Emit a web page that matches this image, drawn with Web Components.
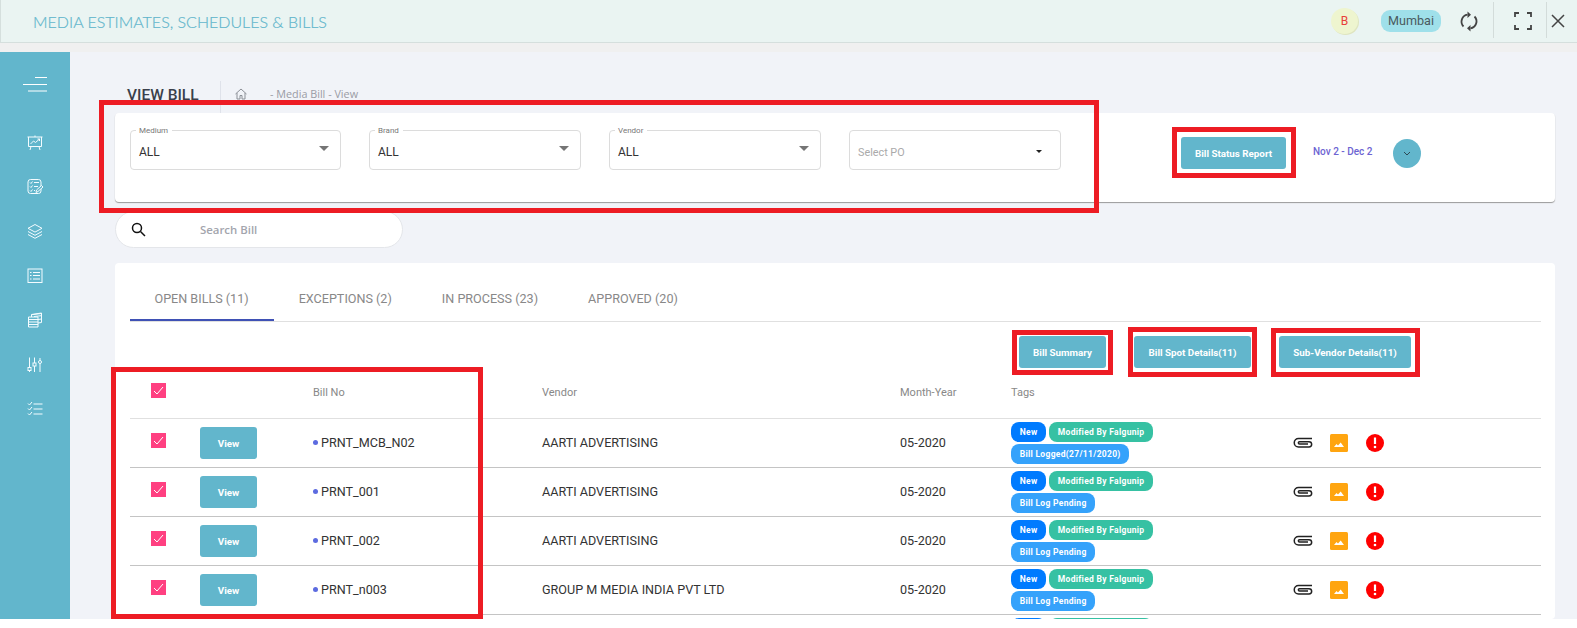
<!DOCTYPE html>
<html>
<head>
<meta charset="utf-8">
<style>
html, body { margin: 0; padding: 0; background: #fff; }
body { width: 1577px; height: 628px; overflow: hidden; font-family: Roboto, sans-serif; position: relative; }
</style>
</head>
<body>
<app-shell></app-shell>

<script>
const ICONS = {
    chart: '<path d="M.5 2h15M1.500 2v9.500h13V2M8 .5V2M4 11.500l-1 3.500M12 11.500l1 3.500M3.500 9l3-3 2 1.500 4-3.500M10.500 4h2v2"/>',
    notes: '<rect x="1" y=".5" width="13" height="14" rx="2.500"/><path d="M3 3.500l1 1 1.500-2M7 3.500h5M3 7.500l1 1 1.500-2M7 7.500h4M3 11.500l1 1 1.500-2M7 11.500h1"/><path d="M9 13.500l.5-2.500 5-4.500 1.500 1.500-5 4.500z" fill="#62b6cc"/>',
    layers: '<path d="M8 .5l7 3.800-7 3.800-7-3.800zM1 7.500l7 3.800 7-3.800M1 10.500l7 3.800 7-3.800"/>',
    list: '<rect x="1" y="1" width="14" height="13.500"/><path d="M3 4.500h1.500M6 4.500h7M3 7.500h1.500M6 7.500h7M3 11h1.500M6 11h7"/>',
    stack: '<path d="M1.500 5h9.500v10H1.500zM1.500 7.500h9.500M1.500 10h9.500M1.500 12.500h9.500M4.500 5V2.500L14.500 1v9.500L11 11M4.500 2.700l10-1.200M7 4.500l7.500-.8M11 7.500l3.500-.5"/>',
    sliders: '<path d="M2.500 .5v10M2.500 14v1M7.500 .5v5.500M7.500 9v6M13 3.500V1M13 6.500V15"/><rect x="1" y="10.500" width="3" height="3"/><rect x="6" y="6" width="3" height="3"/><circle cx="13" cy="5" r="1.500"/>',
    checks: '<path d="M1 2.500l1.500 1.500 2.500-3M6.500 3H15.500M1 7.500L2.500 9 5 6M6.500 8H15.500M1 12.500L2.500 14 5 11M6.500 13H15.500"/>'
};

const shellTemplate = document.createElement('template');
shellTemplate.innerHTML = `
<style>
:host { display: block; width: 1577px; height: 628px; position: relative; }
#gap { height: 9px; background: #f0f0f0; }
#body { display: flex; height: 567px; }
#content { flex: 1; background: #f1f3f8; padding: 29px 22px 0 45px; overflow: hidden; }
.mark { position: absolute; border: 5px solid #ed1c24; box-sizing: border-box; pointer-events: none; }
</style>
<top-bar></top-bar>
<div id="gap"></div>
<div id="body">
    <side-nav></side-nav>
    <div id="content">
        <page-title></page-title>
        <filter-card></filter-card>
        <search-box></search-box>
        <bill-panel></bill-panel>
    </div>
</div>
<div class="mark" style="left:99px;top:100px;width:1000px;height:113px"></div>
<div class="mark" style="left:1172px;top:127px;width:124px;height:51px"></div>
<div class="mark" style="left:1012px;top:330px;width:101px;height:45px"></div>
<div class="mark" style="left:1128px;top:327px;width:129px;height:50px"></div>
<div class="mark" style="left:1271px;top:328px;width:149px;height:49px"></div>
<div class="mark" style="left:111px;top:367px;width:372px;height:252px"></div>
`;
class AppShell extends HTMLElement {
    constructor() {
        super();
        this.attachShadow({ mode: 'open' }).appendChild(shellTemplate.content.cloneNode(true));
    }
}
customElements.define('app-shell', AppShell);

const topTemplate = document.createElement('template');
topTemplate.innerHTML = `
<style>
:host { display: flex; align-items: center; height: 43px; box-sizing: border-box; background: #eaf4f2; border: 1px solid #d5dfdd; border-width: 0 0 1px 1px; }
#title { font: 300 16px Lato, sans-serif; -webkit-text-stroke: .2px #62b6cc; color: #62b6cc; margin-left: 32px; flex: 1; }
#avatar { width: 27px; height: 26px; border-radius: 50%; background: #eef5cf; box-shadow: 1px 1px 0 #dfe5c0; color: #e8403a; font-size: 12px; display: flex; align-items: center; justify-content: center; margin-right: 23px; }
#city { width: 60px; height: 22px; text-align: center; border-radius: 9px; background: #9fe0ea; color: #4a5a60; font-size: 12.600px; line-height: 21px; margin-right: 18px; }
svg { display: block; fill: none; stroke: #444; }
.sep { width: 1px; height: 36px; background: #d3dcda; align-self: flex-start; margin-top: 2px; }
</style>
<div id="title">MEDIA ESTIMATES, SCHEDULES &amp; BILLS</div>
<div id="avatar">B</div>
<div id="city">Mumbai</div>
<svg width="20" height="21" viewBox="0 0 20 21" stroke-width="1.800" style="margin-right:14px">
    <path d="M8.500 3.700A7 7 0 0 0 4.500 15.500M11.500 17.300A7 7 0 0 0 15.500 5.500"/>
    <path d="M8.500 .5v6.500l3.500-3.200zM11.500 14v6.500L8 17.200z" fill="#444" stroke="none"/>
</svg>
<div class="sep"></div>
<svg width="18" height="18" viewBox="0 0 18 18" stroke-width="1.800" style="margin:0 14px 0 20px">
    <path d="M1 5V1h4M13 1h4v4M17 13v4h-4M5 17H1v-4"/>
</svg>
<div class="sep"></div>
<svg width="14" height="14" viewBox="0 0 14 14" stroke-width="1.500" style="margin:0 12px 0 4px">
    <path d="M1 1l12 12M13 1L1 13"/>
</svg>
`;
class TopBar extends HTMLElement {
    constructor() {
        super();
        this.attachShadow({ mode: 'open' }).appendChild(topTemplate.content.cloneNode(true));
    }
}
customElements.define('top-bar', TopBar);

const navTemplate = document.createElement('template');
navTemplate.innerHTML = `
<style>
:host { display: block; width: 70px; background: #62b6cc; flex: none; padding-top: 25px; box-sizing: border-box; }
#burger { display: block; margin: 0 0 0 23px; }
#items { display: flex; flex-direction: column; gap: 28.330px; align-items: center; margin-top: 43px; }
svg.item { display: block; width: 16px; height: 16px; fill: none; stroke: #f4fcff; stroke-width: 1; }
</style>
<svg id="burger" width="24" height="15" viewBox="0 0 24 15" stroke="#fff" stroke-width="1"><path d="M12 .5h12M0 7.500h24M5 14h19"/></svg>
<div id="items"></div>
`;
class SideNav extends HTMLElement {
    constructor() {
        super();
        this.attachShadow({ mode: 'open' }).appendChild(navTemplate.content.cloneNode(true));
        const items = this.shadowRoot.querySelector('#items');
        ['chart', 'notes', 'layers', 'list', 'stack', 'sliders', 'checks'].forEach(name => {
            items.insertAdjacentHTML('beforeend', `<svg class="item" viewBox="0 0 16 16">${ICONS[name]}</svg>`);
        });
    }
}
customElements.define('side-nav', SideNav);

const titleTemplate = document.createElement('template');
titleTemplate.innerHTML = `
<style>
:host { display: flex; align-items: flex-start; height: 32px; margin-left: 12px; }
h1 { margin: 0; font: 500 15.500px/29px Roboto, sans-serif; color: #3a3f4a; width: 93px; border-right: 1px solid #dfe2ea; height: 32px; }
#crumb { display: flex; align-items: center; margin-left: 14px; height: 25px; font: 400 10.800px "Open Sans", sans-serif; color: #9a9ca5; }
svg { display: block; margin-right: 23px; fill: none; stroke: #8b8f96; }
</style>
<h1>VIEW BILL</h1>
<div id="crumb">
    <svg width="12" height="12" viewBox="0 0 12 12"><path d="M.5 6L6 1l5.500 5M2 5v6h3V7.500h2V11h3V5"/></svg>
    <span>- Media Bill - View</span>
</div>
`;
class PageTitle extends HTMLElement {
    constructor() {
        super();
        this.attachShadow({ mode: 'open' }).appendChild(titleTemplate.content.cloneNode(true));
    }
}
customElements.define('page-title', PageTitle);

const selectTemplate = document.createElement('template');
selectTemplate.innerHTML = `
<style>
:host { display: block; height: 40px; box-sizing: border-box; border: 1px solid #dcdcdc; border-radius: 4px; position: relative; background: #fff; font-family: Roboto, sans-serif; }
#label { position: absolute; left: 5px; top: -5px; padding: 0 4px 0 3px; background: #fff; font-size: 8px; line-height: 9px; color: #777; }
#value { position: absolute; left: 8px; top: 14px; font-size: 12px; line-height: 15px; color: #333; }
#arrow { position: absolute; right: 11px; top: 15px; width: 0; height: 0; border: 5px solid transparent; border-top: 5px solid #757575; border-bottom: 0; }
:host([plain]) #value { color: #aaa; font-size: 10.800px; }
:host([plain]) #arrow { border-width: 3px 3.500px 0; border-top-color: #222; right: 18px; top: 19px; }
</style>
<span id="label"></span>
<span id="value"></span>
<span id="arrow"></span>
`;
class FilterSelect extends HTMLElement {
    constructor() {
        super();
        this.attachShadow({ mode: 'open' }).appendChild(selectTemplate.content.cloneNode(true));
        const label = this.shadowRoot.querySelector('#label');
        if (this.getAttribute('label')) label.textContent = this.getAttribute('label');
        else label.remove();
        this.shadowRoot.querySelector('#value').textContent = this.getAttribute('value');
    }
}
customElements.define('filter-select', FilterSelect);

const btnTemplate = document.createElement('template');
btnTemplate.innerHTML = `
<style>
:host { display: inline-flex; align-items: center; justify-content: center; height: 32px; box-sizing: border-box; background: #62b6cc; border-radius: 3px; color: #fff; font: 700 9.800px Roboto, sans-serif; white-space: nowrap; }
</style>
<slot></slot>
`;
class TealButton extends HTMLElement {
    constructor() {
        super();
        this.attachShadow({ mode: 'open' }).appendChild(btnTemplate.content.cloneNode(true));
    }
}
customElements.define('teal-button', TealButton);

const filterTemplate = document.createElement('template');
filterTemplate.innerHTML = `
<style>
:host { display: flex; align-items: flex-start; height: 89px; box-sizing: border-box; padding-top: 17px; padding-left: 15px; background: #fff; border-radius: 4px; box-shadow: 0 1px 1px #9a9a9a; }
filter-select { flex: none; }
#status { width: 105px; margin-left: 120px; margin-top: 7px; }
#range { margin-left: 27px; margin-top: 16px; font: 500 10px/12px Roboto, sans-serif; color: #6d64d2; white-space: nowrap; }
#round { width: 28px; height: 29px; border-radius: 50%; background: #62b6cc; margin-left: 21px; margin-top: 9px; display: flex; align-items: center; justify-content: center; }
</style>
<filter-select style="width:211px" label="Medium" value="ALL"></filter-select>
<filter-select style="width:212px;margin-left:28px" label="Brand" value="ALL"></filter-select>
<filter-select style="width:212px;margin-left:28px" label="Vendor" value="ALL"></filter-select>
<filter-select style="width:212px;margin-left:28px" plain value="Select PO"></filter-select>
<teal-button id="status">Bill Status Report</teal-button>
<div id="range">Nov 2 - Dec 2</div>
<div id="round"><svg width="8" height="5" viewBox="0 0 8 5" fill="none" stroke="#2d4a55"><path d="M1 1l3 3 3-3"/></svg></div>
`;
class FilterCard extends HTMLElement {
    constructor() {
        super();
        this.attachShadow({ mode: 'open' }).appendChild(filterTemplate.content.cloneNode(true));
    }
}
customElements.define('filter-card', FilterCard);

const searchTemplate = document.createElement('template');
searchTemplate.innerHTML = `
<style>
:host { display: flex; align-items: center; width: 288px; height: 37px; box-sizing: border-box; margin-top: 9px; background: #fff; border: 1px solid #e4e6ea; border-radius: 19px; }
svg { display: block; margin-left: 15px; fill: none; stroke: #111; stroke-width: 1.500; }
span { margin-left: 54px; font: 600 11.400px "Open Sans", sans-serif; color: #a3a5ad; }
</style>
<svg width="15" height="15" viewBox="0 0 15 15"><circle cx="6" cy="6" r="4.500"/><path d="M9.500 9.500l4.500 4.500"/></svg>
<span>Search Bill</span>
`;
class SearchBox extends HTMLElement {
    constructor() {
        super();
        this.attachShadow({ mode: 'open' }).appendChild(searchTemplate.content.cloneNode(true));
    }
}
customElements.define('search-box', SearchBox);

const rowTemplate = document.createElement('template');
rowTemplate.innerHTML = `
<style>
:host { display: grid; grid-template-columns: 70px 113px 229px 358px 111px 1fr; height: 49px; box-sizing: border-box; border-bottom: 1px solid #c4c4c4; font: 400 12.600px Roboto, sans-serif; color: #333; align-items: center; }
#check { width: 15px; height: 15px; margin-left: 21px; margin-top: -5px; background: #ff4081; display: flex; align-items: center; justify-content: center; }
#view { width: 57px; height: 32px; }
#bill { display: flex; align-items: center; color: #333; }
#bill i { width: 5px; height: 5px; border-radius: 50%; background: #5c6be0; margin-right: 3px; }
#bill, #vendor, #month { margin-top: -2px; }
#tags { display: flex; flex-wrap: wrap; gap: 2px 3px; align-content: center; width: 160px; }
.tag { height: 20px; padding: 0 8.700px; border-radius: 8px; color: #fff; font: 700 8.500px/20px Roboto, sans-serif; letter-spacing: .3px; white-space: nowrap; }
.new { background: #007bff; }
.mod { background: #36c1a3; }
.log { background: #35a2fb; }
#actions { display: flex; align-items: center; padding-left: 122px; gap: 17px; }
svg { display: block; }
</style>
<div id="check"><svg width="11" height="9" viewBox="0 0 11 9" fill="none" stroke="#fff" stroke-width="1"><path d="M1 5l3 3 6-7"/></svg></div>
<teal-button id="view">View</teal-button>
<div id="bill"><i></i><span id="no"></span></div>
<div id="vendor"></div>
<div id="month">05-2020</div>
<div style="display:flex">
    <div id="tags">
        <span class="tag new">New</span>
        <span class="tag mod">Modified By Falgunip</span>
        <span class="tag log" id="log"></span>
    </div>
    <div id="actions">
        <svg width="20" height="12" viewBox="0 0 20 12" fill="none" stroke="#222" stroke-width="1.500"><path d="M19 1.500H5.500a4 4 0 0 0 0 8.500H16a2.500 2.500 0 0 0 0-5.300H6.500a1.100 1.100 0 0 0 0 2.300H15"/></svg>
        <svg width="18" height="18" viewBox="0 0 18 18"><rect width="18" height="18" rx="1.500" fill="#ffa510"/><path d="M4 13l2.500-3 1.500 1.500 2.700-3L14 13z" fill="#fff"/></svg>
        <svg width="18" height="18" viewBox="0 0 18 18" style="margin-left:1px"><circle cx="9" cy="9" r="9" fill="#f00"/><path d="M9 3.500v6.500" stroke="#fff" stroke-width="2.200"/><circle cx="9" cy="13" r="1.300" fill="#fff"/></svg>
    </div>
</div>
`;
class BillRow extends HTMLElement {
    constructor() {
        super();
        this.attachShadow({ mode: 'open' }).appendChild(rowTemplate.content.cloneNode(true));
        this.shadowRoot.querySelector('#no').textContent = this.getAttribute('no');
        this.shadowRoot.querySelector('#vendor').textContent = this.getAttribute('vendor');
        this.shadowRoot.querySelector('#log').textContent = this.getAttribute('log') || 'Bill Log Pending';
    }
}
customElements.define('bill-row', BillRow);

// only the first pixel of the next row shows above the page edge
const stubTemplate = document.createElement('template');
stubTemplate.innerHTML = `
<style>
:host { display: flex; gap: 3px; height: 4px; padding: 3px 0 0 881px; overflow: hidden; }
i { display: block; height: 20px; border-radius: 8px; }
</style>
<i style="width:35px;background:#007bff"></i>
<i style="width:104px;background:#36c1a3"></i>
`;
class RowStub extends HTMLElement {
    constructor() {
        super();
        this.attachShadow({ mode: 'open' }).appendChild(stubTemplate.content.cloneNode(true));
    }
}
customElements.define('row-stub', RowStub);

const panelTemplate = document.createElement('template');
panelTemplate.innerHTML = `
<style>
:host { display: block; margin-top: 15px; width: 1440px; height: 356px; padding: 0 14px 0 15px; box-sizing: border-box; background: #fff; border-radius: 4px; overflow: hidden; }
#tabs { display: flex; height: 58px; border-bottom: 1px solid #e0e0e0; font: 400 12.600px Roboto, sans-serif; color: #888; box-sizing: content-box; }
.tab { height: 58px; padding: 0 25px 0 25px; line-height: 71px; box-sizing: border-box; white-space: nowrap; }
.tab.on { border-bottom: 2px solid #3f51b5; padding-left: 24.500px; }
#actions { display: flex; padding-left: 889px; gap: 28px; height: 48px; padding-top: 14px; box-sizing: border-box; }
#head { display: grid; grid-template-columns: 70px 113px 229px 358px 111px 1fr; height: 49px; padding-bottom: 3px; box-sizing: border-box; border-bottom: 1px solid #e0e0e0; font: 400 11px Roboto, sans-serif; color: #888; align-items: center; }
#all { width: 15px; height: 15px; margin-left: 21px; margin-top: -4px; background: #ff4081; display: flex; align-items: center; justify-content: center; }
svg { display: block; }
</style>
<div id="tabs">
    <div class="tab on">OPEN BILLS (11)</div>
    <div class="tab">EXCEPTIONS (2)</div>
    <div class="tab">IN PROCESS (23)</div>
    <div class="tab">APPROVED (20)</div>
</div>
<div id="actions">
    <teal-button style="width:87px">Bill Summary</teal-button>
    <teal-button style="width:117px">Bill Spot Details(11)</teal-button>
    <teal-button style="width:132px">Sub-Vendor Details(11)</teal-button>
</div>
<div id="head">
    <div id="all"><svg width="11" height="9" viewBox="0 0 11 9" fill="none" stroke="#fff" stroke-width="1"><path d="M1 5l3 3 6-7"/></svg></div>
    <div></div>
    <div>Bill No</div>
    <div>Vendor</div>
    <div>Month-Year</div>
    <div>Tags</div>
</div>
<bill-row no="PRNT_MCB_N02" vendor="AARTI ADVERTISING" log="Bill Logged(27/11/2020)"></bill-row>
<bill-row no="PRNT_001" vendor="AARTI ADVERTISING"></bill-row>
<bill-row no="PRNT_002" vendor="AARTI ADVERTISING"></bill-row>
<bill-row no="PRNT_n003" vendor="GROUP M MEDIA INDIA PVT LTD"></bill-row>
<row-stub></row-stub>
`;
class BillPanel extends HTMLElement {
    constructor() {
        super();
        this.attachShadow({ mode: 'open' }).appendChild(panelTemplate.content.cloneNode(true));
    }
}
customElements.define('bill-panel', BillPanel);
</script>
</body>
</html>
